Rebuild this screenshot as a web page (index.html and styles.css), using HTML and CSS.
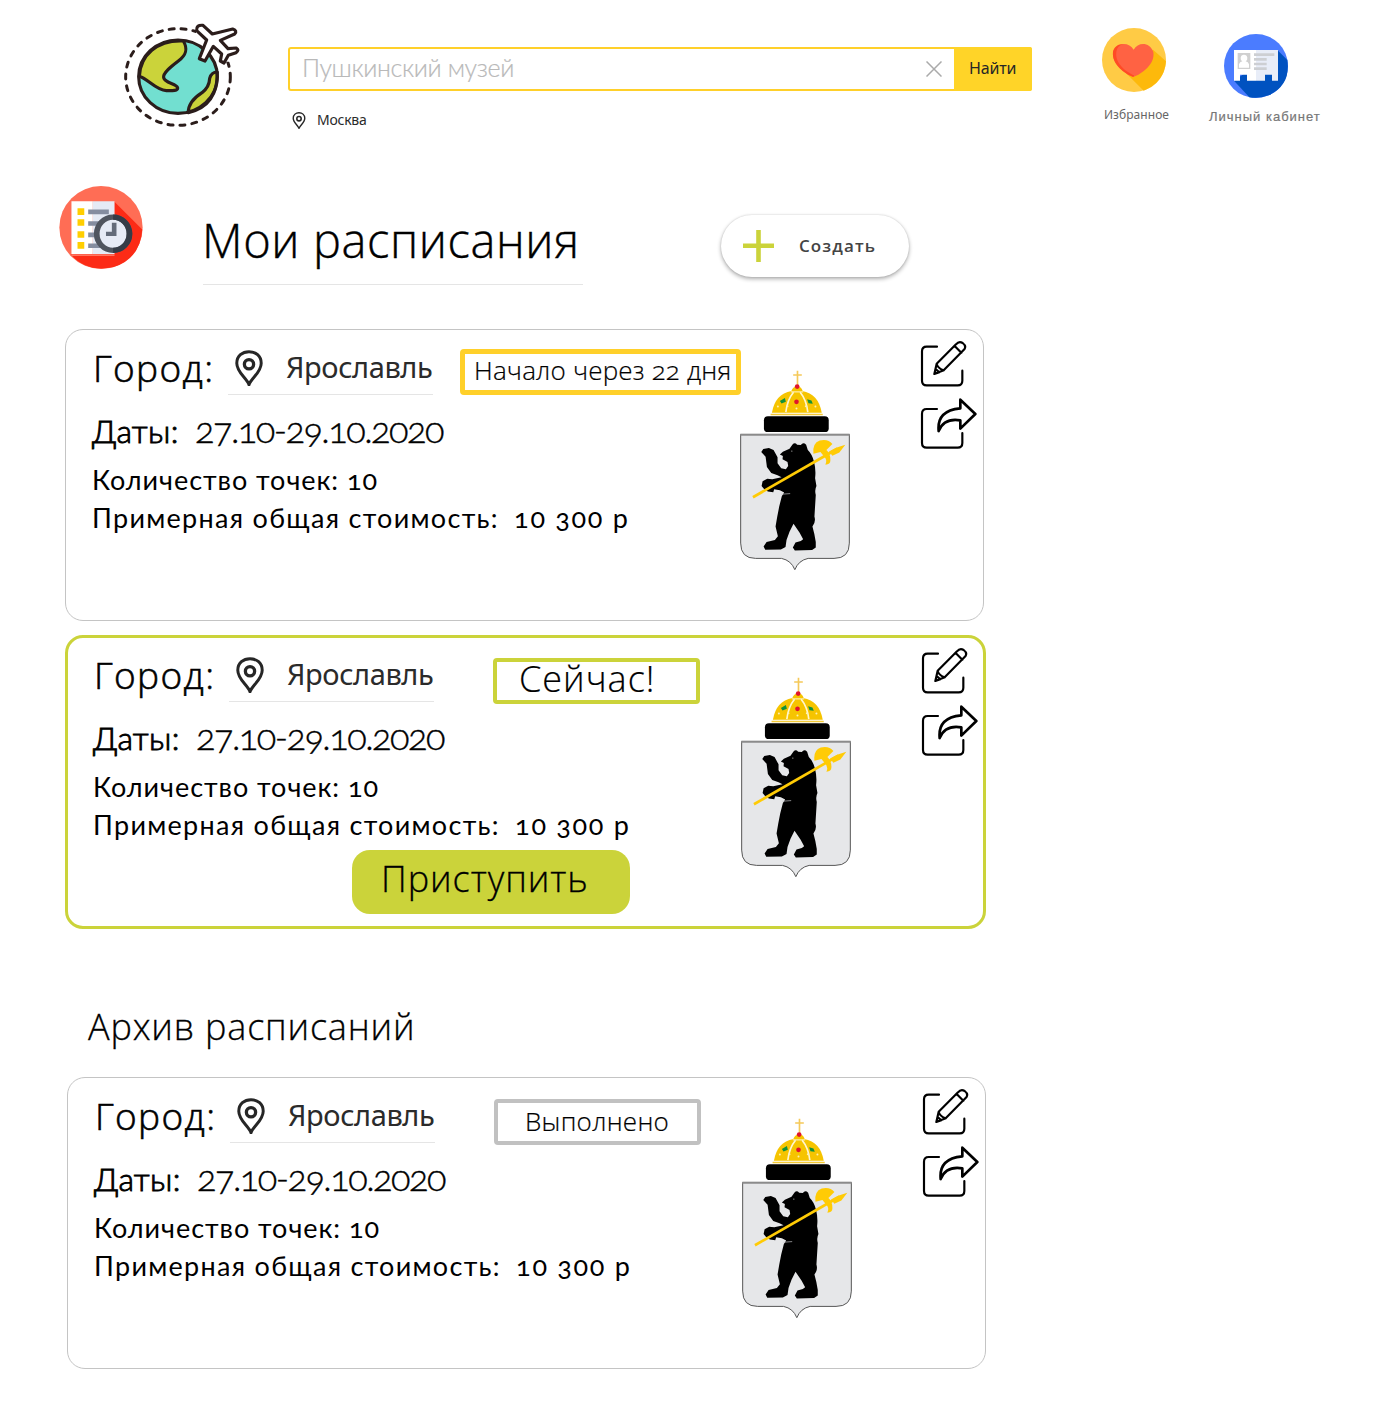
FILE: index.html
```html
<!DOCTYPE html>
<html lang="ru">
<head>
<meta charset="utf-8">
<title>Мои расписания</title>
<link rel="stylesheet" href="styles.css">
</head>
<body>
<svg class="sprite" aria-hidden="true">
  <symbol id="pin" viewBox="526 89 84 109">
    <path d="M568 194C561 174 531 157 531 129C531 107 548 94 568 94S605 107 605 129C605 157 575 174 568 194Z" fill="none" stroke="#262626" stroke-width="9"/>
    <circle cx="568" cy="132" r="14" fill="none" stroke="#262626" stroke-width="10"/>
  </symbol>
  <symbol id="edit" viewBox="60 60 141 141">
    <g fill="none" stroke="#000" stroke-width="6.5" stroke-linecap="round" stroke-linejoin="round">
      <path d="M111 80H80Q66 80 66 94V182Q66 196 80 196H173Q187 196 187 182V152"/>
      <path d="M103 162L110 131L168 73Q177 62 188 69Q200 78 193 88L131 151ZM164 78L184 98M110 132Q115 146 131 151M103 162L107 147L118 157Z"/>
    </g>
  </symbol>
  <symbol id="share" viewBox="60 230 171 159">
    <g fill="none" stroke="#000" stroke-width="6.5" stroke-linecap="round" stroke-linejoin="round">
      <path d="M111 266H80Q66 266 66 280V368Q66 382 80 382H173Q187 382 187 368V338"/>
      <path d="M181 238L226 281L181 325V300Q132 292 116 332Q110 270 181 264Z" stroke-width="8"/>
    </g>
  </symbol>
  <symbol id="emblem" viewBox="45 30 331 603">
    <path d="M47 223H374V550Q374 596 328 596H250Q221 602 210 630Q199 602 170 596H92Q47 596 47 550Z" fill="#e6e7e9" stroke="#555" stroke-width="3"/>
    <path d="M46 224H375" stroke="#8b8b8b" stroke-width="6"/>
    <rect x="117" y="168" width="195" height="48" rx="12"/>
    <path d="M141 158Q150 101 200 92H232Q282 101 291 158Z" fill="#f6c400"/>
    <path d="M199 93Q205 78 217 78T234 93Z" fill="#f6c400"/>
    <path d="M137 163H294" stroke="#f3c935" stroke-width="5"/>
    <path d="M183 156Q187 119 206 96M249 156Q245 119 226 96" fill="none" stroke="#fff6d0" stroke-width="5"/>
    <path d="M198 95H235" stroke="#fff6d0" stroke-width="3"/>
    <path d="M218 31V76M205 44H231" stroke="#f5c95a" stroke-width="5"/>
    <g fill="#e0142c"><circle cx="217" cy="79" r="7"/><circle cx="215" cy="125" r="7"/></g>
    <path d="M165 122L180 113L183 125L170 130ZM247 117L260 121L264 131L251 129Z" fill="#11913a"/>
    <g fill="#fff0b0"><circle cx="159" cy="139" r="3"/><circle cx="188" cy="138" r="3"/><circle cx="215" cy="145" r="3"/><circle cx="243" cy="138" r="3"/><circle cx="272" cy="139" r="3"/></g>
    <path d="M165 283L174 275L194 266L203 253Q210 246 217 254L228 255Q235 245 244 254L249 270Q262 282 268 306Q274 330 271 355L275 378Q269 390 273 405L269 470Q274 486 263 500Q269 520 273 547V563L262 571L210 572L204 563L212 548L228 544L235 538L224 518L206 492L194 516L185 541L182 562L168 569L121 570L116 560L125 547L150 541L159 529L152 500L157 471L163 440L171 408L178 398L165 391L148 388L145 397L129 395L118 388L110 378L113 364L127 356L142 358L170 352L158 346L139 339L126 321L122 290L109 276L115 267L132 264L146 270L158 292L158 310L169 325L183 328L190 318L188 306L173 298L174 288Z"/>
    <path d="M168 403L196 401" stroke="#c9c9cb" stroke-width="2"/>
    <circle cx="201" cy="273" r="2" fill="#aaa"/>
    <path d="M84 412L338 266" stroke="#ffcb05" stroke-width="8"/>
    <path d="M313 274L334 263L362 254L344 277L323 287Z" fill="#ffcb05"/>
    <path d="M266 281Q262 249 285 241Q310 235 323 252L305 270Q318 281 317 301Q317 314 302 314Q309 299 297 288L287 276Z" fill="#ffcb05"/>
  </symbol>
</svg>

<header class="header">
  <svg class="logo" viewBox="0 0 450 360" aria-label="Логотип">
    <ellipse cx="204" cy="186" rx="157" ry="145" fill="none" stroke="#2b1d1b" stroke-width="9" stroke-dasharray="15 21" stroke-linecap="round"/>
    <path d="M258 0H450V140H330L258 60Z" fill="#fff"/>
    <ellipse cx="204" cy="185" rx="118" ry="110" fill="#72dfd0"/>
    <g stroke="#2b1d1b" stroke-width="9.5" stroke-linejoin="round">
      <path d="M88 184C91 122 140 74 220 78C236 105 226 122 205 138C184 154 158 174 161 188C165 206 200 205 203 219C203 228 186 227 169 227C138 226 111 189 88 184Z" fill="#cbd33a"/>
      <path d="M322 171Q304 171 299 190Q298 216 276 233Q234 260 235 293Q324 272 322 171Z" fill="#cbd33a"/>
      <ellipse cx="204" cy="185" rx="118" ry="110" fill="none"/>
      <path d="M260 47Q258 29 279 31L307 57L368 42Q383 47 374 57L331 76L354 101L379 99Q389 105 378 113L355 121L342 144L331 138L335 117L310 94L285 138L268 131L290 75Z" fill="#fff"/>
    </g>
  </svg>
  <div class="search-block">
    <form class="search">
      <span class="query">Пушкинский музей</span>
      <svg class="clear" viewBox="0 0 16 16"><path d="M.5.5L15.5 15.5M15.5.5L.5 15.5" stroke="#aaa" stroke-width="1.5"/></svg>
      <button class="find" type="button">Найти</button>
    </form>
    <div class="location"><svg class="pin-small"><use href="#pin"/></svg>Москва</div>
  </div>
  <a class="shortcut favourites">
    <svg viewBox="36 24 192 192">
      <circle cx="132" cy="120" r="96" fill="#ffcb45"/>
      <path d="M189 89L228 124Q223 187 161 212L107 158Z" fill="#fdb90b"/>
      <path d="M131 89C118 66 80 65 69 96C65 133 105 162 130 171C155 162 196 133 190 96C179 65 144 66 131 89Z" fill="#ff6243"/>
      <path d="M98 73C83 72 72 82 69 96C65 133 105 162 130 171L132 166C108 155 74 130 79 95C81 83 88 76 98 73Z" fill="#ff4b25"/>
    </svg>
    <span>Избранное</span>
  </a>
  <a class="shortcut cabinet">
    <svg viewBox="402 42 192 192">
      <circle cx="498" cy="138" r="96" fill="#4b7cff"/>
      <path d="M563 91L592 120Q603 195 536 226Q506 237 478 232L432 182Z" fill="#0052c0"/>
      <path d="M432 90H498V182H471V164H450V182H432Z" fill="#fff"/>
      <path d="M498 90H564V182H546V164H525V182H498Z" fill="#e8edf8"/>
      <rect x="443" y="99" width="38" height="48" fill="#d0d0d0"/>
      <path d="M447 143V133Q449 126 457 124Q451 121 452 113Q453 104 462 104T472 113Q473 121 467 124Q475 126 477 133V143Z" fill="#fff"/>
      <path d="M492 104H553M492 118H530M492 132H530M492 146H530" stroke="#cdcfd3" stroke-width="8"/>
    </svg>
    <span>Личный кабинет</span>
  </a>
</header>

<main>
  <div class="title-row">
    <svg class="title-icon" viewBox="53 47 236 250" preserveAspectRatio="none">
      <ellipse cx="171" cy="172" rx="117" ry="125" fill="#ff6d55"/>
      <path d="M208 94L287 178Q281 267 205 292Q130 307 86 253L208 240Z" fill="#fc2b16"/>
      <path d="M88 93H148V252H88Z" fill="#fff"/>
      <path d="M148 93H209V252H148Z" fill="#e5eaf5"/>
      <path d="M88 255H209" stroke="#ff7560" stroke-width="5"/>
      <path d="M105 124H124M105 157H124M105 193H124M105 226H124" stroke="#ffce00" stroke-width="20"/>
      <path d="M135 125H193M135 160H170M135 194H165M135 227H170" stroke="#858da0" stroke-width="14"/>
      <ellipse cx="205" cy="191" rx="46" ry="50" fill="#e6ebf6" stroke="#50555f" stroke-width="16"/>
      <path d="M205 141A46 50 0 0 1 205 241" fill="none" stroke="#353c47" stroke-width="16"/>
      <path d="M208 158V191H185" fill="none" stroke="#636b7a" stroke-width="13"/>
    </svg>
    <h1>Мои расписания</h1>
    <button class="create" type="button">
      <svg viewBox="0 0 31 32"><path d="M0 15.8H31M15.5 0V32" stroke="#cbd33a" stroke-width="4.6"/></svg>
      Создать
    </button>
  </div>

  <article class="card planned">
    <div class="details">
      <div class="city-row"><span class="label">Город:</span><div class="city"><svg><use href="#pin"/></svg>Ярославль</div><div class="badge">Начало через 22 дня</div></div>
      <div class="dates-row"><span class="label">Даты:</span><span class="dates">27.10-29.10.2020</span></div>
      <p class="points">Количество точек: <span>10</span></p>
      <p class="cost">Примерная общая стоимость: <span>10 300 р</span></p>
    </div>
    <svg class="emblem"><use href="#emblem"/></svg>
    <div class="actions"><svg class="edit"><use href="#edit"/></svg><svg class="share"><use href="#share"/></svg></div>
  </article>

  <article class="card current">
    <div class="details">
      <div class="city-row"><span class="label">Город:</span><div class="city"><svg><use href="#pin"/></svg>Ярославль</div><div class="badge">Сейчас!</div></div>
      <div class="dates-row"><span class="label">Даты:</span><span class="dates">27.10-29.10.2020</span></div>
      <p class="points">Количество точек: <span>10</span></p>
      <p class="cost">Примерная общая стоимость: <span>10 300 р</span></p>
      <button class="start" type="button">Приступить</button>
    </div>
    <svg class="emblem"><use href="#emblem"/></svg>
    <div class="actions"><svg class="edit"><use href="#edit"/></svg><svg class="share"><use href="#share"/></svg></div>
  </article>

  <h2>Архив расписаний</h2>

  <article class="card done">
    <div class="details">
      <div class="city-row"><span class="label">Город:</span><div class="city"><svg><use href="#pin"/></svg>Ярославль</div><div class="badge">Выполнено</div></div>
      <div class="dates-row"><span class="label">Даты:</span><span class="dates">27.10-29.10.2020</span></div>
      <p class="points">Количество точек: <span>10</span></p>
      <p class="cost">Примерная общая стоимость: <span>10 300 р</span></p>
    </div>
    <svg class="emblem"><use href="#emblem"/></svg>
    <div class="actions"><svg class="edit"><use href="#edit"/></svg><svg class="share"><use href="#share"/></svg></div>
  </article>
</main>
</body>
</html>
```
FILE: styles.css
```css
* { box-sizing: border-box; margin: 0; }
body { width: 1400px; min-height: 1424px; background: #fff; color: #000; font-family: Lato, "Open Sans", sans-serif; }
button { padding: 0; border: 0; font-family: inherit; color: inherit; text-align: left; }
svg { display: block; flex: none; }
.sprite { position: absolute; width: 0; height: 0; }
h1, h2, .city-row .label, .badge, .start { font-family: "Open Sans", sans-serif; font-weight: 300; white-space: nowrap; }

/* Header */
.header { display: flex; align-items: flex-start; height: 186px; padding: 15px 0 0 110px; }
.logo { width: 150px; height: 120px; }
.search-block { width: 744px; margin: 32px 0 0 28px; }
.search { display: flex; align-items: center; height: 44px; border: 2px solid #ffd02a; border-radius: 3px; }
.query { flex: 1; padding: 0 0 5px 12px; font-size: 25px; line-height: 36px; font-weight: 300; letter-spacing: -.38px; color: #b9b9b9; -webkit-text-stroke: .2px #b9b9b9; }
.clear { width: 16px; height: 16px; margin: 0 12px 0 0; }
.find { width: 78px; height: 44px; margin-right: -2px; padding: 0 0 2px 15px; border-radius: 0 2px 2px 0; background: #ffd428; color: #262626; font: 16px/42px "Noto Sans", sans-serif; letter-spacing: -.15px; }
.location { display: flex; align-items: center; margin: 18px 0 0 4px; font: 14px/22px "Noto Sans", sans-serif; letter-spacing: -.25px; color: #2a2a2a; }
.pin-small { width: 14px; height: 17px; margin-right: 11px; }
.shortcut { display: flex; flex-direction: column; }
.shortcut svg { width: 64px; height: 64px; }
.favourites { margin: 13px 0 0 70px; font: 12px/18px "Noto Sans", sans-serif; letter-spacing: .05px; color: #666; }
.favourites span { margin: 14px 0 0 2px; }
.cabinet { margin: 19px 0 0 40px; font: 13px/18px "Liberation Sans", sans-serif; letter-spacing: 1px; color: #777; -webkit-text-stroke: .2px #777; }
.cabinet svg { margin-left: 15px; }
.cabinet span { margin-top: 10px; }

/* Page title */
.title-row { display: flex; align-items: flex-start; padding-left: 59px; }
.title-icon { width: 84px; height: 83px; }
h1 { width: 380px; height: 75px; margin: 24px 0 0 60px; border-bottom: 1px solid #e5e5e5; font-size: 47px; line-height: 61px; letter-spacing: .6px; text-indent: -1px; -webkit-text-stroke: .4px #000; }
.create { display: flex; align-items: center; gap: 25px; width: 188px; height: 62px; margin: 29px 0 0 138px; padding-left: 22px; border-radius: 31px; background: #fff; box-shadow: 0 2px 4px rgba(0,0,0,.32), 0 0 2px rgba(0,0,0,.14); color: #444; font: 600 17px/58px "Open Sans", sans-serif; letter-spacing: 1.1px; }
.create svg { width: 31px; height: 32px; }

/* Schedule cards */
.card { display: flex; align-items: flex-start; width: 919px; height: 292px; border: 1px solid #c4c4c4; border-radius: 18px; padding: 10px 0 0 26px; }
.planned { margin: 44px 0 0 65px; }
.current { width: 921px; height: 294px; margin: 14px 0 0 65px; border: 3px solid #cbd33a; padding: 9px 0 0 25px; }
.done { margin: 29px 0 0 67px; }
.details { width: 648px; padding-top: 9px; }
.city-row { display: flex; height: 46px; }
.city-row .label { flex: none; width: 136px; font-size: 37px; line-height: 37px; letter-spacing: 1.4px; text-indent: 1px; -webkit-text-stroke: .6px #000; }
.city { display: flex; flex: none; align-items: flex-start; width: 205px; height: 46px; padding-left: 7px; border-bottom: 1px solid #e5e5e5; font: 29px/36px "Noto Sans", sans-serif; letter-spacing: -.4px; color: #2b2b2b; }
.city svg { width: 28px; height: 36px; margin: 1px 23px 0 0; }
.badge { flex: none; width: 281px; height: 46px; margin-left: 27px; padding-left: 9px; border: 5px solid #ffd02a; border-radius: 4px; font-size: 26px; line-height: 32px; letter-spacing: .2px; font-variant-numeric: oldstyle-nums; -webkit-text-stroke: .2px #000; }
.current .badge, .done .badge { width: 207px; margin: 2px 0 0 59px; border-width: 4px; }
.current .badge { padding-left: 22px; border-color: #cbd33a; font-size: 36px; line-height: 33px; letter-spacing: 1px; }
.done .badge { padding-left: 27px; border-color: #c1c1c1; line-height: 36px; letter-spacing: .3px; }
.dates-row { display: flex; margin-top: 12px; line-height: 47px; font-size: 32px; }
.dates-row .label { width: 104px; font-weight: 300; letter-spacing: .4px; -webkit-text-stroke: .9px #000; }
.dates { font-size: 36px; line-height: 45px; font-weight: 300; font-variant-numeric: oldstyle-nums; letter-spacing: -1.5px; text-indent: -1px; -webkit-text-stroke: .4px #000; }
.points, .cost { font-size: 27px; line-height: 38px; font-variant-numeric: oldstyle-nums; white-space: nowrap; }
.points { margin-top: 7px; letter-spacing: .95px; }
.cost { letter-spacing: 1.3px; }
.cost span { margin-left: 7px; letter-spacing: 1.7px; }
.start { display: block; width: 278px; height: 64px; margin: 6px 0 0 259px; padding: 0 0 6px 29px; border-radius: 18px; background: #cbd33a; font-size: 36px; line-height: 58px; letter-spacing: .95px; -webkit-text-stroke: .3px #000; }
.emblem { width: 110px; height: 201px; margin-top: 30px; }
.actions { margin-left: 70px; }
.edit { width: 47px; height: 47px; }
.share { width: 57px; height: 53px; margin-top: 10px; }

h2 { margin: 76px 0 0 88px; font-size: 36px; line-height: 44px; letter-spacing: .8px; -webkit-text-stroke: .3px #000; }
h2 + .done { margin-top: 28px; }
```
